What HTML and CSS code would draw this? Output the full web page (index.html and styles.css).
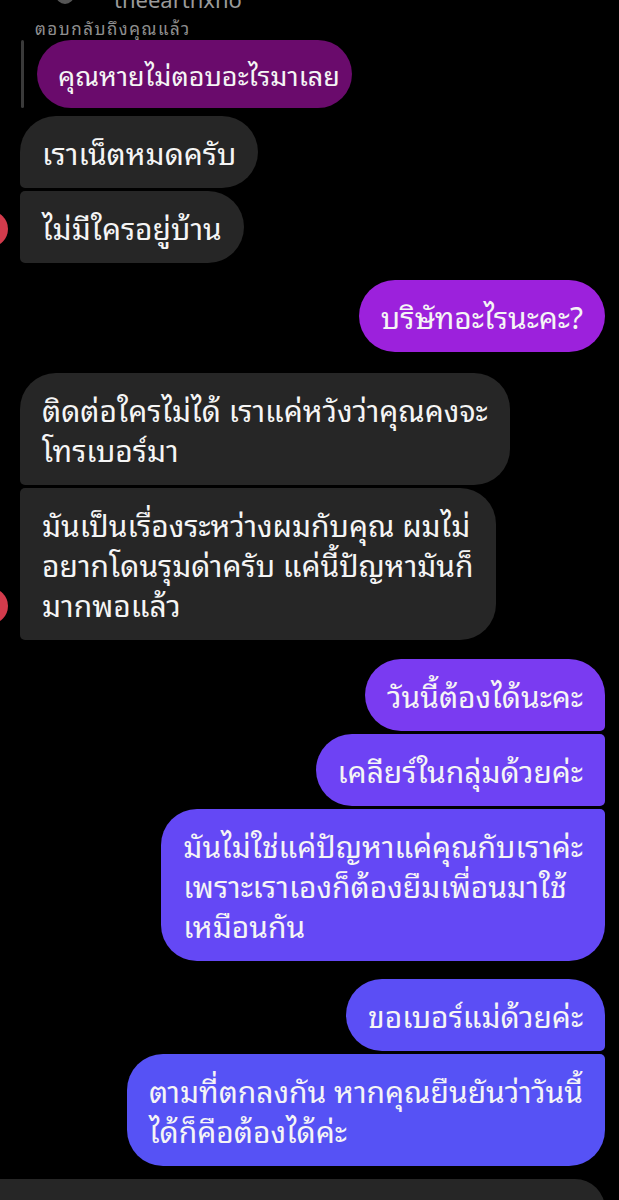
FILE: index.html
```html
<!DOCTYPE html>
<html lang="th">
<head>
  <meta charset="UTF-8">
  <title>แชท</title>
  <meta name="viewport" content="width=device-width, initial-scale=1.0">
  <link rel="stylesheet" href="styles.css">
</head>
<body>

<main class="thread">
  <!-- header peeking in from above -->
  <div class="peek">
    <span class="peek-avatar"></span>
    <span class="peek-name">theearthxno</span>
  </div>
  <div class="reply-note">ตอบกลับถึงคุณแล้ว</div>

  <div class="reply">
    <div class="reply-bar"></div>
    <div class="bubble quote">คุณหายไม่ตอบอะไรมาเลย</div>
  </div>

  <div class="group in first-in">
    <div class="bubble">เราเน็ตหมดครับ</div>
    <div class="bubble">ไม่มีใครอยู่บ้าน</div>
    <span class="avatar"></span>
  </div>

  <div class="group out single-out">
    <div class="bubble magenta">บริษัทอะไรนะคะ?</div>
  </div>

  <div class="group in second-in">
    <div class="bubble">ติดต่อใครไม่ได้ เราแค่หวังว่าคุณคงจะ<br>โทรเบอร์มา</div>
    <div class="bubble">มันเป็นเรื่องระหว่างผมกับคุณ ผมไม่<br>อยากโดนรุมด่าครับ แค่นี้ปัญหามันก็<br>มากพอแล้ว</div>
    <span class="avatar"></span>
  </div>

  <div class="group out third-out">
    <div class="bubble violet-1">วันนี้ต้องได้นะคะ</div>
    <div class="bubble violet-2">เคลียร์ในกลุ่มด้วยค่ะ</div>
    <div class="bubble violet-3">มันไม่ใช่แค่ปัญหาแค่คุณกับเราค่ะ<br>เพราะเราเองก็ต้องยืมเพื่อนมาใช้<br>เหมือนกัน</div>
  </div>

  <div class="group out last-out">
    <div class="bubble blue-1">ขอเบอร์แม่ด้วยค่ะ</div>
    <div class="bubble blue-2">ตามที่ตกลงกัน หากคุณยืนยันว่าวันนี้<br>ได้ก็คือต้องได้ค่ะ</div>
  </div>

  <div class="composer"></div>
</main>

</body>
</html>
```

FILE: styles.css
```css
* {
  box-sizing: border-box;
}
body {
  margin: 0;
  padding: 0;
  background-color: #000;
  color: #f5f5f5;
  font-family: "Noto Sans Thai Looped", "Noto Sans Thai", "Noto Sans", sans-serif;
  height: 100vh;
  overflow: hidden;
}

.thread {
  display: flex;
  flex-direction: column;
  padding: 0 14px 0 20px;
}

/* header that is scrolled mostly out of view */
.peek {
  height: 9px;
  overflow: hidden;
  display: flex;
  align-items: flex-end;
  gap: 40px;
  padding-left: 36px;
}
.peek-avatar {
  width: 18px;
  height: 18px;
  border-radius: 50%;
  background: #555;
  margin-bottom: 5px;
}
.peek-name {
  font-size: 22px;
  line-height: 22px;
  color: #9a9a9a;
}
.reply-note {
  margin-top: 10px;
  padding-left: 15px;
  font-size: 17px;
  line-height: 18px;
  letter-spacing: 1.5px;
  color: #8f8f8f;
}

.reply {
  display: flex;
  gap: 13px;
  margin-top: 3px;
  align-self: flex-start;
}
.reply-bar {
  width: 3px;
  margin-left: 1px;
  border-radius: 2px;
  background: #3a3a3a;
}

/* bubbles */
.bubble {
  padding: 16px 22px;
  font-size: 30px;
  line-height: 40px;
  border-radius: 36px;
  background: #262626;
  white-space: nowrap;
}
.bubble.quote {
  background: #6a0b6c;
  font-size: 27px;
  padding: 14px 12px 14px 21px;
}
.magenta  { background: #9c21dc; }
.violet-1 { background: #7a3bf1; }
.violet-2 { background: #6e42f4; }
.violet-3 { background: #6448f5; }
.blue-1   { background: #5b4ef5; }
.blue-2   { background: #5652f5; }

.group {
  display: flex;
  flex-direction: column;
  gap: 3px;
  position: relative;
}
.group.in {
  align-items: flex-start;
}
.group.out {
  align-items: flex-end;
}
.in .bubble:not(:last-child)  { border-bottom-left-radius: 5px; }
.in .bubble:not(:first-child) { border-top-left-radius: 5px; }
.out .bubble:not(:last-child)  { border-bottom-right-radius: 5px; }
.out .bubble:not(:first-child) { border-top-right-radius: 5px; }

.first-in   { margin-top: 8px; }
.single-out { margin-top: 17px; }
.second-in  { margin-top: 21px; }
.third-out  { margin-top: 19px; }
.last-out   { margin-top: 18px; }

/* sender avatar, cut off by the screen edge */
.avatar {
  position: absolute;
  left: -48px;
  bottom: 16px;
  width: 36px;
  height: 36px;
  border-radius: 50%;
  background: #d33b4c;
}

.composer {
  margin: 13px 0 0 -20px;
  height: 60px;
  background: #262626;
  border-top-right-radius: 30px;
}
```
